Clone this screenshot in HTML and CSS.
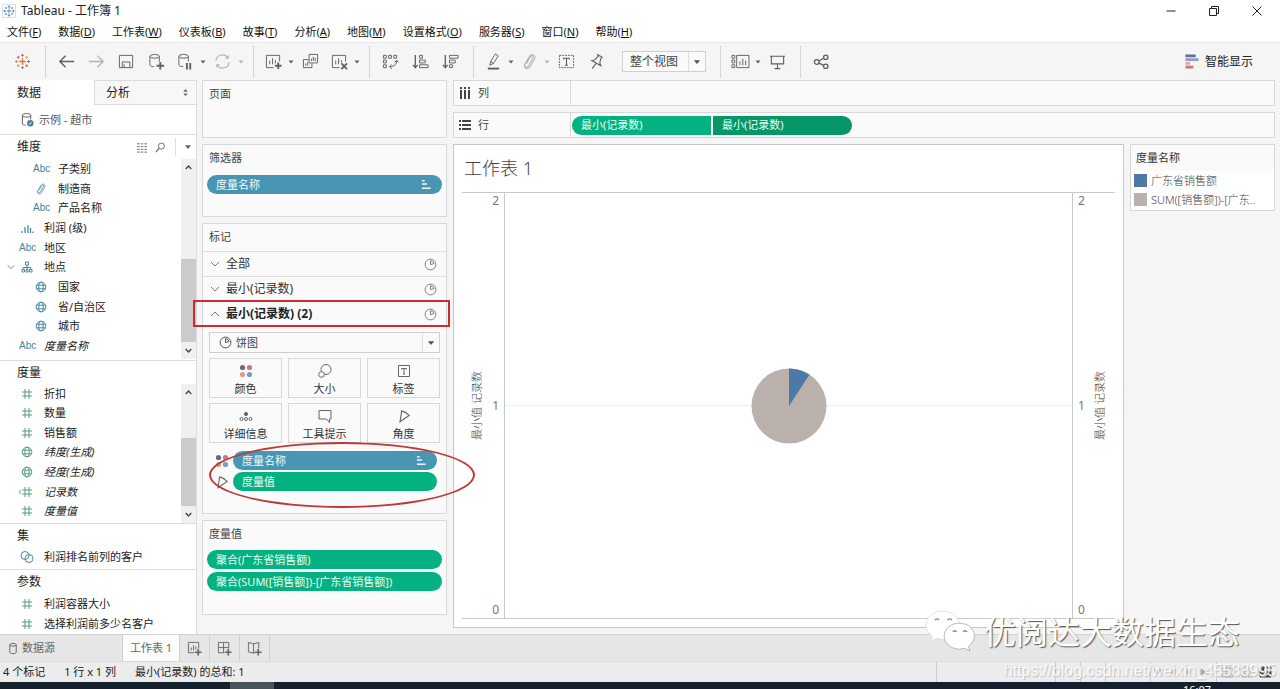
FILE: index.html
```html
<!DOCTYPE html>
<html lang="zh-CN">
<head>
<meta charset="utf-8">
<title>Tableau - 工作簿 1</title>
<link rel="stylesheet" href="styles.css">
</head>
<body>
<svg class="defs" aria-hidden="true">
  <defs>
    <symbol id="caret" viewBox="0 0 8 8"><path d="M1.5 2.5h5L4 5.5z" fill="currentColor"/></symbol>
    <symbol id="down" viewBox="0 0 10 10"><path d="M1 3l4 4 4-4"/></symbol>
    <symbol id="up" viewBox="0 0 10 10"><path d="M1 7l4-4 4 4"/></symbol>
    <symbol id="plus" viewBox="0 0 16 16"><path d="M12 8.500v7M8.500 12h7" stroke-width="1.800"/></symbol>
    <symbol id="hash" viewBox="0 0 12 12"><path d="M4 1v10M8 1v10M1 4h10M1 8h10"/></symbol>
    <symbol id="globe" viewBox="0 0 12 12"><circle cx="6" cy="6" r="4.800"/><ellipse cx="6" cy="6" rx="2.200" ry="4.800"/><path d="M1.700 4.200h8.600M1.700 7.800h8.600"/></symbol>
    <symbol id="clip" viewBox="1 0 14 16"><path d="M5 10l4-6.500c1-1.600 3.200-.4 2.300 1.200L7.200 12c-1.400 2.500-4.800.7-3.400-1.900L8 3c1.900-3.200 6.700-.8 4.800 2.500L8.500 13c-2 3.200-6.500 1-5-2.500"/></symbol>
    <symbol id="pie" viewBox="0 0 14 14"><circle cx="7" cy="7" r="5.800"/><path d="M7 7V3a4 4 0 0 1 3.800 3z"/></symbol>
    <symbol id="angle" viewBox="0 0 14 14"><path d="M5 2.500L3.500 12 11.500 6.500C9.500 4.500 7.500 3 5 2.500z"/></symbol>
    <symbol id="sorted" viewBox="0 0 12 12"><path d="M1 2h3M1 5.500h5.500M1 10h9.500" stroke-width="1.700"/></symbol>
    <symbol id="dots" viewBox="0 0 16 16"><circle cx="4.500" cy="4.500" r="2.600" fill="#6d6880"/><circle cx="11.500" cy="4.500" r="2.600" fill="#d27384"/><circle cx="4.500" cy="11.500" r="2.600" fill="#e39b7d"/><circle cx="11.500" cy="11.500" r="2.600" fill="#7b9cc0"/></symbol>
    <symbol id="tlogo" viewBox="0 0 18 18"><path d="M9 5.500v7M5.500 9h7" stroke="#d9773f" stroke-width="1.500"/><path d="M9 1v3M7.500 2.500h3" stroke="#8a6d9b"/><path d="M9 14v3M7.500 15.500h3" stroke="#8a6d9b"/><path d="M2.500 7.500v3M1 9h3" stroke="#b98a4a"/><path d="M15.500 7.500v3M14 9h3" stroke="#5a7292"/><path d="M4.500 3v3M3 4.500h3" stroke="#c9585f"/><path d="M13.500 3v3M12 4.500h3" stroke="#d9a23f"/><path d="M4.500 12v3M3 13.500h3" stroke="#c9a34a"/><path d="M13.500 12v3M12 13.500h3" stroke="#c9585f"/></symbol>
  </defs>
</svg>

<header class="titlebar">
  <svg class="applogo" viewBox="0 0 16 16"><rect x=".5" y=".5" width="15" height="15" stroke="#d5dde3"/><path d="M8 5v6M5 8h6M8 1.500v3M6.500 3h3M8 11.500v3M6.500 13h3M3 6.500v3M1.500 8h3M13 6.500v3M11.500 8h3M4.500 3.500v2M3.500 4.500h2M11.500 3.500v2M10.500 4.500h2M4.500 10.500v2M3.500 11.500h2M11.500 10.500v2M10.500 11.500h2" stroke="#4d87ad"/></svg>
  <h1>Tableau - 工作簿 1</h1>
  <div class="winbtns">
    <button aria-label="最小化"><svg viewBox="0 0 12 12"><path d="M1.500 6h9"/></svg></button>
    <button aria-label="还原"><svg viewBox="0 0 12 12"><path d="M1.500 3.500h7v7h-7zM3.500 3V1.500h7v7H9"/></svg></button>
    <button aria-label="关闭"><svg viewBox="0 0 12 12"><path d="M1.500 1.500l9 9M10.500 1.500l-9 9"/></svg></button>
  </div>
</header>

<nav class="menubar">
  <a href="#">文件(<u>F</u>)</a><a href="#">数据(<u>D</u>)</a><a href="#">工作表(<u>W</u>)</a><a href="#">仪表板(<u>B</u>)</a><a href="#">故事(<u>T</u>)</a><a href="#">分析(<u>A</u>)</a><a href="#">地图(<u>M</u>)</a><a href="#">设置格式(<u>O</u>)</a><a href="#">服务器(<u>S</u>)</a><a href="#">窗口(<u>N</u>)</a><a href="#">帮助(<u>H</u>)</a>
</nav>

<div class="toolbar">
  <button class="tool" aria-label="起始页"><svg viewBox="0 0 18 18"><use href="#tlogo"/></svg></button>
  <span class="sep"></span>
  <button class="tool" aria-label="撤消"><svg viewBox="0 0 18 18"><path d="M2 9h15M8 3L2 9l6 6" stroke-width="1.500"/></svg></button>
  <button class="tool off" aria-label="重做"><svg viewBox="0 0 18 18"><path d="M1 9h15M10 3l6 6-6 6" stroke-width="1.500"/></svg></button>
  <button class="tool" aria-label="保存"><svg viewBox="0 0 18 18"><path d="M1.500 2.500h14v13h-14zM4.500 15.500v-6h8v6M6.500 12v3"/></svg></button>
  <button class="tool" aria-label="新建数据源"><svg viewBox="0 0 18 18"><ellipse cx="7" cy="3.500" rx="5" ry="2"/><path d="M2 3.500v9c0 1.200 2 2 4.500 2M12 3.500V9"/><path d="M13 9.500v8M9 13.500h8" stroke-width="2"/></svg></button>
  <button class="tool narrow" aria-label="暂停自动更新"><svg viewBox="0 0 18 18"><ellipse cx="7" cy="3.500" rx="5" ry="2"/><path d="M2 3.500v9c0 1.200 2 2 4.500 2M12 3.500V9"/><path d="M10.500 10.500v7M14 10.500v7" stroke-width="2"/></svg></button>
  <button class="drop" aria-label="更新选项"><svg><use href="#caret"/></svg></button>
  <button class="tool off" aria-label="运行更新"><svg viewBox="0 0 18 18"><path d="M2 8a7 7 0 0 1 13-2.500M16 10a7 7 0 0 1-13 2.500" stroke-width="1.300"/><path d="M15.500 2v4h-4zM2.500 16v-4h4z" fill="currentColor" stroke="none"/></svg></button>
  <button class="drop off" aria-label="运行选项"><svg><use href="#caret"/></svg></button>
  <span class="sep"></span>
  <button class="tool narrow" aria-label="新建工作表"><svg viewBox="0 0 18 18"><path d="M9 15.500H1.500v-13h14V9M5 12V8M8 12V5.500M11 11V7.500"/><path d="M14 10v7M10.500 13.500h7" stroke-width="2"/></svg></button>
  <button class="drop" aria-label="新建选项"><svg><use href="#caret"/></svg></button>
  <button class="tool" aria-label="复制工作表"><svg viewBox="0 0 18 18"><path d="M7.500 1.500h9v9h-9zM10 8.500V6M12 8.500V4M14 8.500V5M7 7H1.500v8.500h9V11M4 13.500V11M6 13.500V9.500"/></svg></button>
  <button class="tool narrow" aria-label="清除工作表"><svg viewBox="0 0 18 18"><path d="M9 15.500H1.500v-13h14V9M5 12V8M8 12V5.500M11 10V7.500"/><path d="M11 11l6 6M17 11l-6 6" stroke-width="1.900"/></svg></button>
  <button class="drop" aria-label="清除选项"><svg><use href="#caret"/></svg></button>
  <span class="sep"></span>
  <button class="tool" aria-label="交换行和列"><svg viewBox="0 0 18 18"><path d="M1.500 2.500h3v3h-3zM7 2.500h3v3H7zM12.500 2.500h3v3h-3zM1.500 7.500h3v3h-3zM1.500 12.500h3v3h-3zM15.500 8c0 4-2.500 6.500-7 6.500M13.500 10l2-2.500 2 2.500M10.500 12l-2.500 2.500 2.500 2.500"/></svg></button>
  <button class="tool" aria-label="升序排序"><svg viewBox="0 0 18 18"><path d="M3.500 2v13M1 12.500l2.500 3 2.500-3" stroke-width="1.400"/><path d="M8 2.500h3v3H8zM8 7.500h6v3H8zM8 12.500h9v3H8z"/></svg></button>
  <button class="tool" aria-label="降序排序"><svg viewBox="0 0 18 18"><path d="M3.500 2v13M1 12.500l2.500 3 2.500-3" stroke-width="1.400"/><path d="M8 2.500h9v3H8zM8 7.500h6v3H8zM8 12.500h3v3H8z"/></svg></button>
  <span class="sep"></span>
  <button class="tool narrow" aria-label="突出显示"><svg viewBox="0 0 18 18"><path d="M5 13l1-4 5-8 3 2-5 8zM6 9l3 2"/><path d="M3 16.500h12" stroke-width="2"/></svg></button>
  <button class="drop" aria-label="突出显示选项"><svg><use href="#caret"/></svg></button>
  <button class="tool narrow off" aria-label="组成员"><svg viewBox="0 0 16 16"><use href="#clip"/></svg></button>
  <button class="drop off" aria-label="分组选项"><svg><use href="#caret"/></svg></button>
  <button class="tool" aria-label="显示标记标签"><svg viewBox="0 0 18 18"><rect x="1.500" y="2.500" width="15" height="13" stroke-dasharray="2 1"/><path d="M6 7V5.500h6V7M9 5.500V13M7.500 13h3" stroke-width="1.200"/></svg></button>
  <button class="tool" aria-label="固定轴"><svg viewBox="0 0 18 18"><path d="M10 1.500l5 3-1.500 1.300-1 4.700 1 3-9.500-5.500 3-.5L11 3zM8.500 11L4.500 16.500" stroke-width="1.200"/></svg></button>
  <div class="picker fit"><select aria-label="适合"><option>整个视图</option></select><svg><use href="#caret"/></svg></div>
  <span class="sep"></span>
  <button class="tool narrow" aria-label="显示/隐藏卡"><svg class="wide" viewBox="0 0 20 18"><path d="M1.500 2.500h3v3h-3zM1.500 7.500h3v3h-3zM1.500 12.500h3v3h-3zM6.500 2.500h13v13h-13zM10 13V9M13 13V6M16 13V8"/></svg></button>
  <button class="drop" aria-label="卡选项"><svg><use href="#caret"/></svg></button>
  <button class="tool" aria-label="演示模式"><svg viewBox="0 0 18 18"><path d="M1 3.500h16M2.500 3.500v8h13v-8M9 11.500v5M6 16.500h6" stroke-width="1.200"/></svg></button>
  <span class="sep"></span>
  <button class="tool" aria-label="共享"><svg viewBox="0 0 18 18"><g stroke-width="1.400"><circle cx="4" cy="9.500" r="2.500"/><circle cx="13.500" cy="4.500" r="2.300"/><circle cx="13.500" cy="14" r="2.300"/><path d="M6.300 8.500l5-3M6.300 10.700l5 2.300"/></g></svg></button>
  <button class="showme"><svg viewBox="0 0 14 16"><path d="M0 2h11" stroke="#6c6d92" stroke-width="3"/><path d="M0 6h14" stroke="#8f9bcb" stroke-width="3"/><path d="M0 10h5" stroke="#e5a3a5" stroke-width="3"/><path d="M0 14h8.500" stroke="#d0717b" stroke-width="3"/></svg>智能显示</button>
</div>

<main class="work">
  <aside class="side">
    <div class="sidetabs"><button class="on">数据</button><button>分析<svg viewBox="0 0 8 10"><path d="M1.500 4L4 1l2.500 3zM1.500 6L4 9l2.500-3z" fill="currentColor" stroke="none"/></svg></button></div>
    <div class="source"><svg viewBox="0 0 14 16"><ellipse cx="6" cy="3.500" rx="4.500" ry="2"/><path d="M1.500 3.500v9c0 1 2 1.500 3.500 1.500M10.500 3.500V8"/><circle cx="10" cy="12" r="3.500" fill="#4c8199" stroke="none"/><path d="M8.500 12l1 1 2-2" stroke="#fff"/></svg>示例 - 超市</div>
    <section class="pane">
      <div class="panehead"><h2>维度</h2>
        <button aria-label="查看数据"><svg viewBox="0 0 12 12"><path d="M0 2h12M0 5h12M0 8h12M0 11h12" stroke-dasharray="3 1"/></svg></button>
        <button aria-label="查找"><svg viewBox="0 0 12 12"><circle cx="7" cy="4.500" r="3.300"/><path d="M4.500 7L1 11" stroke-width="1.300"/></svg></button>
        <button class="more" aria-label="菜单"><svg><use href="#caret"/></svg></button>
      </div>
      <div class="scroller dims">
        <ul class="fields">
          <li class="in"><b>Abc</b>子类别</li>
          <li class="in"><svg viewBox="0 0 14 14"><use href="#clip"/></svg>制造商</li>
          <li class="in"><b>Abc</b>产品名称</li>
          <li><svg viewBox="0 0 12 12"><path d="M1 9v2M4 5v6M7 3v8M9.500 6v5M12 9.500V11" stroke-width="1.300"/></svg>利润 (级)</li>
          <li><b>Abc</b>地区</li>
          <li><svg class="twist" viewBox="0 0 10 10"><use href="#down"/></svg><svg viewBox="0 0 12 12"><path d="M4.500 1h3v3h-3zM1 8.500h2.500V11H1zM5 8.500h2V11H5zM8.500 8.500H11V11H8.500zM6 4v4.500M2.200 8.500v-2h7.600v2"/></svg>地点</li>
          <li class="in"><svg viewBox="0 0 12 12"><use href="#globe"/></svg>国家</li>
          <li class="in"><svg viewBox="0 0 12 12"><use href="#globe"/></svg>省/自治区</li>
          <li class="in"><svg viewBox="0 0 12 12"><use href="#globe"/></svg>城市</li>
          <li><b>Abc</b><i>度量名称</i></li>
        </ul>
        <div class="bar"><svg viewBox="0 0 10 10"><use href="#up"/></svg><span class="track"><span class="thumb"></span></span><svg viewBox="0 0 10 10"><use href="#down"/></svg></div>
      </div>
    </section>
    <section class="pane">
      <div class="panehead tight"><h2>度量</h2></div>
      <div class="scroller meas">
        <ul class="fields green">
          <li><svg viewBox="0 0 12 12"><use href="#hash"/></svg>折扣</li>
          <li><svg viewBox="0 0 12 12"><use href="#hash"/></svg>数量</li>
          <li><svg viewBox="0 0 12 12"><use href="#hash"/></svg>销售额</li>
          <li><svg viewBox="0 0 12 12"><use href="#globe"/></svg><i>纬度(生成)</i></li>
          <li><svg viewBox="0 0 12 12"><use href="#globe"/></svg><i>经度(生成)</i></li>
          <li><svg viewBox="0 0 12 12"><use href="#hash"/><path d="M-2 5h2M-2 7h2"/></svg><i>记录数</i></li>
          <li><svg viewBox="0 0 12 12"><use href="#hash"/></svg><i>度量值</i></li>
        </ul>
        <div class="bar"><svg viewBox="0 0 10 10"><use href="#up"/></svg><span class="track"><span class="thumb"></span></span><svg viewBox="0 0 10 10"><use href="#down"/></svg></div>
      </div>
    </section>
    <section class="pane sets">
      <div class="panehead tight"><h2>集</h2></div>
      <ul class="fields"><li><svg viewBox="0 0 12 12"><circle cx="4" cy="4.500" r="4"/><circle cx="8" cy="7.500" r="4"/></svg>利润排名前列的客户</li></ul>
    </section>
    <section class="pane last">
      <div class="panehead"><h2>参数</h2></div>
      <ul class="fields green"><li><svg viewBox="0 0 12 12"><use href="#hash"/></svg>利润容器大小</li><li><svg viewBox="0 0 12 12"><use href="#hash"/></svg>选择利润前多少名客户</li></ul>
    </section>
  </aside>

  <div class="cards">
    <section class="card pages"><h3>页面</h3></section>
    <section class="card filters"><h3>筛选器</h3><div class="pill blue">度量名称<svg viewBox="0 0 12 12"><use href="#sorted"/></svg></div></section>
    <section class="card marks">
      <h3>标记</h3>
      <button class="layer"><svg viewBox="0 0 10 10"><use href="#down"/></svg><span>全部</span><svg viewBox="0 0 14 14"><use href="#pie"/></svg></button>
      <button class="layer"><svg viewBox="0 0 10 10"><use href="#down"/></svg><span>最小(记录数)</span><svg viewBox="0 0 14 14"><use href="#pie"/></svg></button>
      <button class="layer open"><svg viewBox="0 0 10 10"><use href="#up"/></svg><span>最小(记录数) (2)</span><svg viewBox="0 0 14 14"><use href="#pie"/></svg></button>
      <div class="picker marktype"><svg class="lead" viewBox="0 0 14 14"><use href="#pie"/></svg><select aria-label="标记类型"><option>饼图</option></select><svg><use href="#caret"/></svg></div>
      <div class="props">
        <button><svg viewBox="0 0 16 16"><g stroke="none"><use href="#dots"/></g></svg>颜色</button>
        <button><svg viewBox="0 0 16 16"><circle cx="9" cy="6.500" r="5"/><circle cx="4.500" cy="11.500" r="2.800" fill="#fafafa"/></svg>大小</button>
        <button><svg viewBox="0 0 16 16"><path d="M2.500 2.500h11v11h-11zM5.500 6.500V5.500h5v1M8 5.500V11M7 11h2"/></svg>标签</button>
        <button><svg viewBox="0 0 16 16"><circle cx="8" cy="6" r="1.600" fill="currentColor"/><circle cx="3.500" cy="11" r="1.500"/><circle cx="8" cy="11" r="1.500"/><circle cx="12.500" cy="11" r="1.500"/></svg>详细信息</button>
        <button><svg viewBox="0 0 16 16"><path d="M2 2.500h12v8.500h-1.500v3.500L9.500 11H2z"/></svg>工具提示</button>
        <button><svg viewBox="0 0 14 14"><use href="#angle"/></svg>角度</button>
      </div>
      <div class="encodings">
        <div class="enc"><svg class="plain" viewBox="0 0 16 16"><use href="#dots"/></svg><div class="pill blue">度量名称<svg viewBox="0 0 12 12"><use href="#sorted"/></svg></div></div>
        <div class="enc"><svg viewBox="0 0 14 14"><use href="#angle"/></svg><div class="pill">度量值</div></div>
        <span class="ring"></span>
      </div>
    </section>
    <section class="card values"><h3>度量值</h3><div class="pill">聚合(广东省销售额)</div><div class="pill">聚合(SUM([销售额])-[广东省销售额])</div></section>
  </div>

  <div class="canvas">
    <div class="shelf"><div class="name"><svg viewBox="0 0 12 12"><path d="M2 0v12M6 0v12M10 0v12" stroke-width="2" stroke-dasharray="2 1 9 0"/></svg>列</div></div>
    <div class="shelf"><div class="name"><svg viewBox="0 0 12 12"><path d="M0 2h12M0 6h12M0 10h12" stroke-width="2" stroke-dasharray="2 1 9 0"/></svg>行</div><div class="drops"><div class="pill left">最小(记录数)</div><div class="pill right">最小(记录数)</div></div></div>
    <div class="viewrow">
      <section class="view">
        <h2>工作表 1</h2>
        <div class="plot">
          <div class="axis"><span class="axname">最小值 记录数</span><div class="ticks"><span>2</span><span>1</span><span>0</span></div></div>
          <div class="area"><svg viewBox="0 0 76 76" role="img" aria-label="饼图"><circle cx="38" cy="38" r="37.500" fill="#bab0ac"/><path d="M38 38V.5A37.500 37.500 0 0 1 58.500 6.600z" fill="#4e79a7"/></svg></div>
          <div class="axis rightax"><div class="ticks"><span>2</span><span>1</span><span>0</span></div><span class="axname">最小值 记录数</span></div>
        </div>
      </section>
      <section class="legend"><h3>度量名称</h3><ul><li><span class="sw s1"></span>广东省销售额</li><li><span class="sw s2"></span>SUM([销售额])-[广东..</li></ul></section>
    </div>
  </div>
</main>

<nav class="sheets">
  <button class="ds"><svg viewBox="0 0 12 14"><ellipse cx="6" cy="3" rx="3.500" ry="1.500"/><path d="M2.500 3v8c0 2 7 2 7 0V3"/></svg>数据源</button>
  <button class="cur">工作表 1</button>
  <button aria-label="新建工作表"><svg viewBox="0 0 16 16"><path d="M8 12.500H1.500v-11h11V8M4.500 10V7M7 10V4.500M9.500 9V6"/><use href="#plus"/></svg></button>
  <button aria-label="新建仪表板"><svg viewBox="0 0 16 16"><path d="M8 12.500H1.500v-11h11V8M1.500 7h11M7 1.500v11"/><use href="#plus"/></svg></button>
  <button aria-label="新建故事"><svg viewBox="0 0 16 16"><path d="M7 3v10L1.500 11.500v-10L7 3l5.500-1.500V8M7 13l1.500-.5"/><use href="#plus"/></svg></button>
</nav>

<footer class="status">
  <span>4 个标记</span><span>1 行 x 1 列</span><span>最小(记录数) 的总和: 1</span>
  <div class="cells">
    <i class="c1"></i><i class="c2"></i><i class="c2"></i><i class="c3"></i>
    <i class="c4"><svg viewBox="0 0 60 12"><path d="M4 3v6M10 3L5 6l5 3zM24 3l-5 3 5 3zM35 3l5 3-5 3zM50 3l5 3-5 3zM56 3v6" fill="currentColor"/></svg></i>
    <i class="c5"><svg viewBox="0 0 60 12"><path d="M5 2h11v9H5zM5 5h11M5 8h11M9 2v9M13 2v9M25 2h4v4h-4zM31 2h4v4h-4zM25 8h4v3h-4zM31 8h4v3h-4z"/><path d="M43 1h11v10H43z" fill="#444" stroke="#444"/><path d="M47 3h3l2 3-2 3h-3" stroke="#fff"/></svg></i>
  </div>
</footer>
<div class="taskbar"><span class="task"></span><span class="clock">16:07</span></div>

<div class="watermark">
  <svg viewBox="0 0 52 44"><g fill="#fff" stroke="#a5a5a5" stroke-width=".8"><path d="M18 1C8 1 1 7.500 1 15.500c0 5 2.500 8.500 6.500 11.500L6 32l6-3c2 .7 4 1 6 1 10 0 17-6.500 17-14.500S28 1 18 1z" stroke="#d8d8d8"/><path d="M35 13.500c-9 0-15.500 6-15.500 13S26 40 35 40c2 0 3.800-.3 5.500-.9L46 42l-1.500-5c3.800-2.500 6-6.300 6-10.500 0-7-6.500-13-15.500-13z"/></g><g stroke="#858585" stroke-width="1.300"><path d="M10 10.500c1-2 3.500-2 4.500 0M23 10.500c1-2 3.500-2 4.500 0M28.500 22.500c.8-1.700 3-1.700 3.800 0M39 22.500c.8-1.700 3-1.700 3.800 0"/></g></svg>
  <span>优阅达大数据生态</span>
</div>
<div class="blogmark">https://blog.csdn.net/weixin_45588995</div>
</body>
</html>
```
FILE: styles.css
```css
* { box-sizing: border-box; }

body {
  margin: 0;
  min-height: 100vh;
  display: flex;
  flex-direction: column;
  position: relative;
  overflow: hidden;
  background: #f5f5f5;
  color: #333;
  font: 11px/16px "Noto Sans", "Noto Sans CJK SC", sans-serif;
}

h1, h2, h3, ul { margin: 0; padding: 0; font-weight: 400; }
ul { list-style: none; }
button, select { font: inherit; color: inherit; background: none; border: 0; padding: 0; margin: 0; }
a { color: inherit; text-decoration: none; }
svg { fill: none; stroke: currentColor; stroke-width: 1; flex: none; display: block; overflow: visible; }
.defs { position: absolute; width: 0; height: 0; }

.titlebar { height: 22px; display: flex; align-items: center; gap: 5px; padding-left: 2px; background: #fff; color: #222; }
.titlebar h1 { font-size: 12px; line-height: 20px; }
.applogo { width: 14px; height: 14px; }
.winbtns { margin-left: auto; display: flex; padding-right: 2px; color: #222; }
.winbtns button { width: 43px; height: 20px; display: grid; place-items: center; }
.winbtns svg { width: 12px; height: 12px; }

.menubar { height: 20px; display: flex; gap: 17px; align-items: center; padding-left: 7px; background: #fff; color: #111; }

.toolbar { height: 38px; display: flex; align-items: center; padding-left: 7px; border-top: 1px solid #e8e8e8; color: #606060; }
.tool { width: 30px; height: 30px; display: grid; place-items: center; }
.tool.narrow { width: 28px; }
.tool svg { width: 17px; height: 17px; }
.tool svg.wide { width: 20px; }
.drop { width: 8px; height: 30px; display: grid; place-items: center; }
.drop svg { width: 8px; height: 8px; stroke: none; }
.off { color: #b5b5b5; }
.sep { width: 1px; height: 32px; margin: 0 5px 0 8px; background: #d4d4d4; }
.picker { position: relative; display: flex; align-items: center; border: 1px solid #cfcfcf; background: #fafafa; }
.picker select { appearance: none; flex: 1; height: 19px; color: #444; }
.picker > svg:last-child { position: absolute; right: 3px; width: 10px; height: 10px; stroke: none; color: #555; pointer-events: none; }
.picker::after { content: ""; position: absolute; right: 16px; top: 0; bottom: 0; width: 1px; background: #dedede; }
.fit { width: 84px; margin: 0 6px 0 11px; }
.fit select { font-size: 12px; padding-left: 7px; }
.showme { display: flex; align-items: center; gap: 6px; margin-left: auto; padding-right: 27px; font-size: 12px; color: #222; }
.showme svg { width: 14px; height: 15px; }

.work { flex: 1; display: flex; min-height: 554px; }
.side { width: 197px; flex: none; background: #fff; border-right: 1px solid #dcdcdc; display: flex; flex-direction: column; color: #222; }
.sidetabs { display: flex; height: 25px; font-size: 12px; }
.sidetabs button { flex: 1; display: flex; align-items: center; justify-content: space-between; text-align: left; padding: 0 7px 0 11px; background: #f7f7f7; border: solid #dcdcdc; border-width: 1px 0 1px 1px; }
.sidetabs .on { flex: none; width: 94px; padding-left: 17px; background: #fff; border: 0; }
.sidetabs svg { width: 7px; height: 9px; color: #666; }
.source { height: 30px; display: flex; align-items: center; gap: 5px; padding-left: 21px; color: #555; border-bottom: 1px solid #dedede; }
.source svg { width: 13px; height: 15px; }

.pane { border-bottom: 1px solid #dedede; }
.pane.last { border: 0; }
.pane.sets { padding-bottom: 2px; }
.panehead { height: 24px; padding-left: 17px; display: flex; align-items: center; }
.panehead.tight { height: 23px; }
.panehead h2 { font-size: 12px; flex: 1; }
.panehead button { width: 18px; height: 18px; display: grid; place-items: center; color: #666; }
.panehead button svg { width: 11px; height: 11px; }
.panehead .more { margin-left: 6px; padding-left: 3px; width: 21px; border-left: 1px solid #ddd; }
.panehead .more svg { stroke: none; width: 10px; height: 10px; }
.scroller { display: flex; }
.dims { height: 201px; padding-bottom: 1px; }
.meas { height: 139px; }
.fields { flex: 1; display: grid; grid-auto-rows: 1fr; color: #222; }
.dims .fields { padding-bottom: 3px; }
.meas .fields { padding-bottom: 2px; }
.fields li { position: relative; display: flex; align-items: center; height: 20px; padding-left: 19px; white-space: nowrap; }
.scroller .fields li { height: auto; }
.fields li.in { padding-left: 33px; }
.fields b { width: 25px; font: 10px/16px "Liberation Sans", sans-serif; color: #41839b; }
.fields svg { width: 12px; height: 12px; margin: 0 11px 0 2px; color: #4a8aa0; }
.fields.green svg { color: #5a9b84; }
.fields .twist { position: absolute; left: 7px; width: 8px; height: 8px; margin: 0; color: #666; }
.bar { width: 15px; background: #f0f0f0; display: flex; flex-direction: column; align-items: center; padding: 5px 0; gap: 5px; color: #444; }
.bar svg { width: 7px; height: 7px; stroke-width: 2; }
.track { flex: 1; width: 100%; display: flex; flex-direction: column; justify-content: flex-end; }
.thumb { background: #cbcbcb; height: 50%; }
.meas .thumb { height: 65%; }

.cards { width: 245px; flex: none; margin-left: 5px; display: flex; flex-direction: column; gap: 6px; }
.card { background: #fafafa; border: 1px solid #d8d8d8; color: #444; }
.card h3 { font-size: 11px; line-height: 16px; padding: 5px 6px 7px; }
.pages { height: 58px; }
.filters { height: 73px; }
.marks { height: 291px; }
.values { height: 95px; }
.pill { height: 19px; margin: 0 4px 3px; padding: 0 10px 0 9px; border-radius: 10px; background: #04b180; color: #e6fff6; display: flex; align-items: center; justify-content: space-between; white-space: nowrap; }
.values h3 { padding-bottom: 8px; }
.pill.blue { background: #4996b2; color: #eef9fc; }
.pill svg { width: 11px; height: 11px; }
.filters .pill { margin-top: 2px; }
.marks h3 { padding-bottom: 6px; }
.layer { width: 100%; height: 25px; display: flex; align-items: center; gap: 6px; padding: 0 9px 0 7px; border-top: 1px solid #dedede; color: #333; font-size: 12px; text-align: left; }
.layer span { flex: 1; }
.layer svg { width: 10px; height: 10px; color: #777; }
.layer svg:last-child { width: 13px; height: 13px; }
.layer.open { font-weight: 700; color: #222; position: relative; }
.layer.open::after { content: ""; position: absolute; inset: -2px -4px -1px -10px; border: 2px solid #cf2b2e; }
.marktype { margin: 6px 6px 5px; height: 21px; }
.marktype .lead { width: 13px; height: 13px; margin: 0 4px 0 9px; }
.props { display: grid; grid-template-columns: repeat(3, 1fr); gap: 5px 6px; margin: 0 6px; }
.props button { height: 40px; border: 1px solid #d8d8d8; display: flex; flex-direction: column; align-items: center; justify-content: space-between; padding: 4px 0 0; color: #333; }
.props svg { width: 16px; height: 16px; color: #666; }
.encodings { position: relative; margin: 8px 5px 0 8px; }
.enc { display: flex; align-items: flex-start; gap: 3px; color: #666; }
.enc > svg { width: 16px; height: 16px; margin: 2px 0 0 3px; }
.enc > .plain { stroke: none; }
.enc .pill { flex: 1; margin: 0 4px 2px 0; }
.ring { position: absolute; left: -2px; top: -9px; width: 266px; height: 66px; border: 2px solid #bd3838; border-radius: 50%; z-index: 2; }

.canvas { flex: 1; min-width: 0; display: flex; flex-direction: column; gap: 6px; padding: 0 5px 6px 6px; }
.shelf { height: 26px; display: flex; background: #fafafa; border: 1px solid #d8d8d8; color: #444; }
.name { width: 117px; display: flex; align-items: center; gap: 7px; padding-left: 5px; border-right: 1px solid #d8d8d8; }
.name svg { width: 12px; height: 12px; }
.drops { display: flex; align-items: center; gap: 2px; padding-left: 1px; }
.drops .pill { width: 139px; margin: 0; }
.pill.left { border-radius: 10px 0 0 10px; }
.pill.right { border-radius: 0 10px 10px 0; background: #059768; }
.viewrow { flex: 1; display: flex; gap: 6px; align-items: flex-start; }
.view { flex: 1; align-self: stretch; display: flex; flex-direction: column; background: #fff; border: 1px solid #c6c6c6; padding: 0 8px 8px; }
.view h2 { height: 47px; line-height: 47px; padding-left: 2px; font-size: 18px; font-weight: 300; color: #444; }
.plot { flex: 1; display: grid; grid-template-columns: 42px 1fr 42px; border: solid #c9c9c9; border-width: 1px 0; }
.axis { display: flex; align-items: stretch; justify-content: space-between; color: #777; }
.axname { align-self: center; width: 16px; margin: 0 7px; writing-mode: vertical-rl; text-orientation: sideways; transform: rotate(180deg); font-weight: 300; color: #444; }
.ticks { display: flex; flex-direction: column; justify-content: space-between; padding-right: 5px; font-size: 12px; }
.rightax .ticks { padding: 0 0 0 5px; }
.area { border: solid #c9c9c9; border-width: 0 1px; display: grid; place-items: center; background: linear-gradient(#efefef, #efefef) center / 100% 1px no-repeat; }
.area svg { width: 76px; height: 76px; stroke: none; }
.legend { width: 145px; background: #fff; border: 1px solid #d8d8d8; padding-bottom: 1px; }
.legend h3 { font-size: 11px; line-height: 26px; padding-left: 5px; background: #fafafa; }
.legend li { display: flex; align-items: center; gap: 4px; height: 19px; padding-left: 3px; color: #444; font-weight: 300; white-space: nowrap; }
.sw { width: 13px; height: 13px; flex: none; }
.s1 { background: #4e79a7; }
.s2 { background: #bab0ac; }

.sheets { height: 27px; display: flex; background: #e6e6e6; border-top: 1px solid #d3d3d3; color: #666; }
.sheets button { width: 30px; border-right: 1px solid #cfcfcf; display: flex; align-items: center; justify-content: center; gap: 3px; }
.sheets .ds { width: 123px; justify-content: flex-start; padding-left: 7px; }
.sheets .cur { width: 57px; background: #fcfcfc; }
.sheets svg { width: 15px; height: 15px; }
.sheets .ds svg { width: 12px; height: 13px; }

.status { height: 21px; display: flex; align-items: center; gap: 19px; padding-left: 3px; background: #ececec; border-top: 1px solid #dadada; color: #222; }
.cells { margin-left: auto; align-self: stretch; display: flex; color: #aaa; }
.cells i { display: flex; align-items: center; border-left: 1px solid #cfcfcf; }
.cells svg { height: 12px; width: 60px; }
.c1 { width: 119px; }
.c2 { width: 25px; }
.c3 { width: 45px; }
.c4 { width: 66px; }
.c5 { width: 64px; }

.taskbar { height: 7px; overflow: hidden; display: flex; justify-content: space-between; padding: 0 69px 0 230px; background: #14212d; color: #fff; }
.task { width: 44px; background: #48525b; }
.clock { line-height: 16px; }

.watermark { position: absolute; right: 40px; bottom: 36px; display: flex; align-items: center; gap: 8px; color: #fff; font-size: 32px; line-height: 42px; text-shadow: 1px 1px 1px #555; white-space: nowrap; }
.watermark svg { width: 51px; height: 43px; }
.blogmark { position: absolute; right: 4px; bottom: 8px; font: 16px/20px "Liberation Sans", sans-serif; color: #fafafa; text-shadow: 1px 1px 1px #bbb; }
```
